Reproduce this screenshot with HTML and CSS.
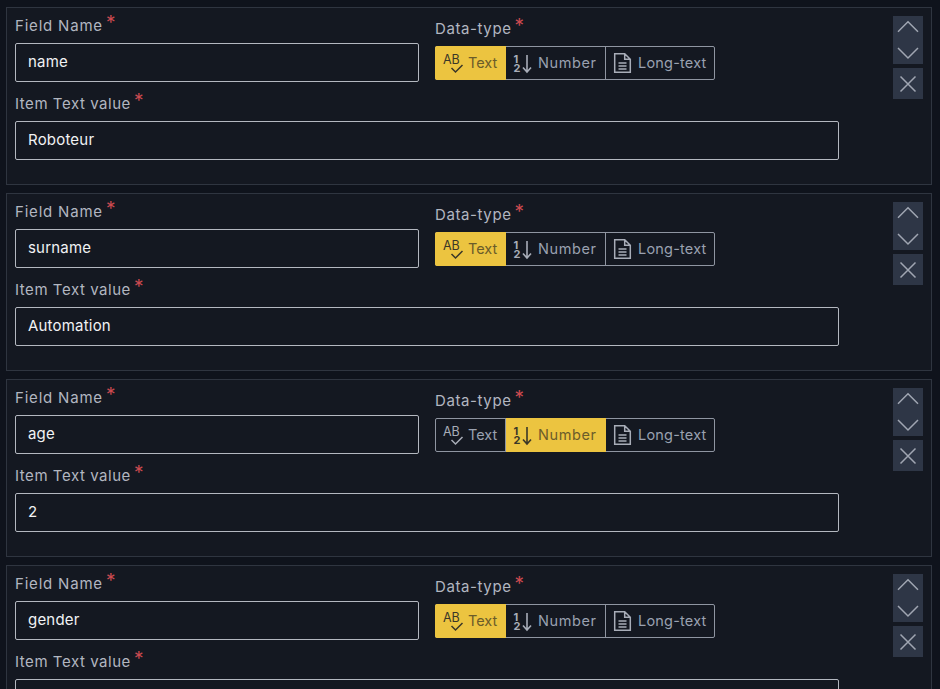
FILE: index.html
```html
<!DOCTYPE html>
<html lang="en">
<head>
<meta charset="utf-8">
<title>Fields</title>
<link rel="stylesheet" href="styles.css">
</head>
<body>
<svg class="defs" width="0" height="0" aria-hidden="true">
  <defs>
    <symbol id="i-ab" viewBox="0 0 24 24">
      <text x="1" y="13" class="ab-text">AB</text>
      <path d="M9.500 17l4 4 7-7" fill="none" stroke="currentColor" stroke-width="1.500"/>
    </symbol>
    <symbol id="i-num" viewBox="0 0 24 24">
      <text x="1.500" y="12" class="num-text">1</text>
      <text x="1.500" y="21" class="num-text">2</text>
      <path d="M15 4v17M11 16.500l4 4.500 4-4.500" fill="none" stroke="currentColor" stroke-width="1.600"/>
    </symbol>
    <symbol id="i-doc" viewBox="0 0 24 24">
      <path d="M3.700 2.700h10l5.600 5.600v13H3.700zM13.700 2.700v5.600h5.600M7.500 12h8M7.500 15h8M7.500 18h8" fill="none" stroke="currentColor" stroke-width="1.500"/>
    </symbol>
    <symbol id="i-up" viewBox="0 0 24 24"><path d="M2 15.700l10-10 10 10" fill="none" stroke="currentColor" stroke-width="1.500"/></symbol>
    <symbol id="i-down" viewBox="0 0 24 24"><path d="M2 8l10 10L22 8" fill="none" stroke="currentColor" stroke-width="1.500"/></symbol>
    <symbol id="i-x" viewBox="0 0 24 24"><path d="M4.500 4.500l15 15M19.500 4.500l-15 15" fill="none" stroke="currentColor" stroke-width="1.500"/></symbol>
  </defs>
</svg>
<main class="list">

  <section class="card">
    <div class="form">
      <div class="row">
        <div class="col-name">
          <div class="label label-name">Field Name<span class="req">*</span></div>
          <div class="input">name</div>
        </div>
        <div class="col-type">
          <div class="label label-type">Data-type<span class="req">*</span></div>
          <div class="group">
            <div class="seg seg-text active"><svg class="ico"><use href="#i-ab"/></svg>Text</div>
            <div class="seg seg-num"><svg class="ico"><use href="#i-num"/></svg>Number</div>
            <div class="seg seg-long"><svg class="ico"><use href="#i-doc"/></svg>Long-text</div>
          </div>
        </div>
      </div>
      <div class="label label-value">Item Text value<span class="req">*</span></div>
      <div class="input">Roboteur</div>
    </div>
    <div class="actions">
      <div class="updown"><svg class="act-ico"><use href="#i-up"/></svg><svg class="act-ico"><use href="#i-down"/></svg></div>
      <div class="close"><svg class="act-ico"><use href="#i-x"/></svg></div>
    </div>
  </section>

  <section class="card">
    <div class="form">
      <div class="row">
        <div class="col-name">
          <div class="label label-name">Field Name<span class="req">*</span></div>
          <div class="input">surname</div>
        </div>
        <div class="col-type">
          <div class="label label-type">Data-type<span class="req">*</span></div>
          <div class="group">
            <div class="seg seg-text active"><svg class="ico"><use href="#i-ab"/></svg>Text</div>
            <div class="seg seg-num"><svg class="ico"><use href="#i-num"/></svg>Number</div>
            <div class="seg seg-long"><svg class="ico"><use href="#i-doc"/></svg>Long-text</div>
          </div>
        </div>
      </div>
      <div class="label label-value">Item Text value<span class="req">*</span></div>
      <div class="input">Automation</div>
    </div>
    <div class="actions">
      <div class="updown"><svg class="act-ico"><use href="#i-up"/></svg><svg class="act-ico"><use href="#i-down"/></svg></div>
      <div class="close"><svg class="act-ico"><use href="#i-x"/></svg></div>
    </div>
  </section>

  <section class="card">
    <div class="form">
      <div class="row">
        <div class="col-name">
          <div class="label label-name">Field Name<span class="req">*</span></div>
          <div class="input">age</div>
        </div>
        <div class="col-type">
          <div class="label label-type">Data-type<span class="req">*</span></div>
          <div class="group">
            <div class="seg seg-text"><svg class="ico"><use href="#i-ab"/></svg>Text</div>
            <div class="seg seg-num active"><svg class="ico"><use href="#i-num"/></svg>Number</div>
            <div class="seg seg-long"><svg class="ico"><use href="#i-doc"/></svg>Long-text</div>
          </div>
        </div>
      </div>
      <div class="label label-value">Item Text value<span class="req">*</span></div>
      <div class="input">2</div>
    </div>
    <div class="actions">
      <div class="updown"><svg class="act-ico"><use href="#i-up"/></svg><svg class="act-ico"><use href="#i-down"/></svg></div>
      <div class="close"><svg class="act-ico"><use href="#i-x"/></svg></div>
    </div>
  </section>

  <section class="card">
    <div class="form">
      <div class="row">
        <div class="col-name">
          <div class="label label-name">Field Name<span class="req">*</span></div>
          <div class="input">gender</div>
        </div>
        <div class="col-type">
          <div class="label label-type">Data-type<span class="req">*</span></div>
          <div class="group">
            <div class="seg seg-text active"><svg class="ico"><use href="#i-ab"/></svg>Text</div>
            <div class="seg seg-num"><svg class="ico"><use href="#i-num"/></svg>Number</div>
            <div class="seg seg-long"><svg class="ico"><use href="#i-doc"/></svg>Long-text</div>
          </div>
        </div>
      </div>
      <div class="label label-value">Item Text value<span class="req">*</span></div>
      <div class="input">&nbsp;</div>
    </div>
    <div class="actions">
      <div class="updown"><svg class="act-ico"><use href="#i-up"/></svg><svg class="act-ico"><use href="#i-down"/></svg></div>
      <div class="close"><svg class="act-ico"><use href="#i-x"/></svg></div>
    </div>
  </section>

</main>
</body>
</html>
```
FILE: styles.css
```css
html, body {
  margin: 0;
  height: 100%;
  overflow: hidden;
  background: #0f131c;
}
body {
  font-family: "Inter", "Open Sans", sans-serif;
  color: #a0a6b2;
}
.defs { position: absolute; }
.list {
  display: flex;
  flex-direction: column;
  gap: 8px;
  padding: 7px 8px 0 6px;
}
.card {
  display: flex;
  justify-content: space-between;
  height: 178px;
  box-sizing: border-box;
  flex-shrink: 0;
  border: 1px solid #2f3540;
  background: #141821;
  padding: 8px 8px 0 8px;
}
.form { width: 824px; }
.row { display: flex; gap: 16px; }
.col-name { width: 404px; }
.col-type { padding-top: 3px; }
.label {
  font-size: 15px;
  line-height: 20px;
  height: 20px;
  color: #b2b6c0;
  margin-bottom: 7px;
}
.label-name { letter-spacing: 0.8px; }
.label-type { letter-spacing: 0.6px; }
.label-value { letter-spacing: 0.55px; margin-top: 12px; }
.req {
  display: inline-block;
  color: #cb4a50;
  margin-left: 3px;
  font-size: 19px;
  line-height: 0;
  letter-spacing: 0;
  transform: translateY(-2px);
}
.input {
  box-sizing: border-box;
  height: 39px;
  border: 1px solid #b4b8c0;
  border-radius: 2px;
  padding: 0 12px;
  font-size: 15px;
  line-height: 36px;
  color: #f1f2f4;
  letter-spacing: 0.2px;
}
.group {
  display: flex;
  width: 280px;
  height: 34px;
  box-sizing: border-box;
  border: 1px solid #8f95a1;
  border-radius: 2px;
  font-size: 14.5px;
}
.seg {
  display: flex;
  align-items: center;
  gap: 2px;
  color: #9aa1b0;
  padding-left: 6px;
  padding-bottom: 2px;
  box-sizing: border-box;
  white-space: nowrap;
}
.seg-text { width: 70px; border-right: 1px solid #8f95a1; letter-spacing: 0; }
.seg-num { width: 100px; border-right: 1px solid #8f95a1; letter-spacing: 0.6px; }
.seg-long { flex: 1; padding-left: 5px; gap: 3px; letter-spacing: 0.2px; }
.seg.active {
  background: #ecc440;
  color: #6b5c2a;
  margin-block: -1px;
  height: 34px;
  border-right: 0;
  padding-bottom: 2px;
}
.seg-text.active {
  width: 71px;
  margin-left: -1px;
  padding-left: 7px;
  border-radius: 2px 0 0 2px;
}
.ico { width: 24px; height: 24px; flex: none; margin-top: 2px; color: #a8adb8; }
.seg.active .ico { color: #3a3728; }
.ab-text { font: 400 12.5px "Inter", sans-serif; fill: currentColor; }
.num-text { font: 700 11px "Inter", sans-serif; fill: currentColor; }
.actions {
  width: 30px;
  display: flex;
  flex-direction: column;
  gap: 4px;
}
.updown {
  background: #2e3646;
  height: 48px;
  display: flex;
  flex-direction: column;
  align-items: center;
  color: #a0a6b2;
}
.close {
  background: #2e3646;
  height: 31px;
  display: flex;
  align-items: center;
  justify-content: center;
  color: #a0a6b2;
}
.act-ico { width: 24px; height: 24px; flex: none; }
```
